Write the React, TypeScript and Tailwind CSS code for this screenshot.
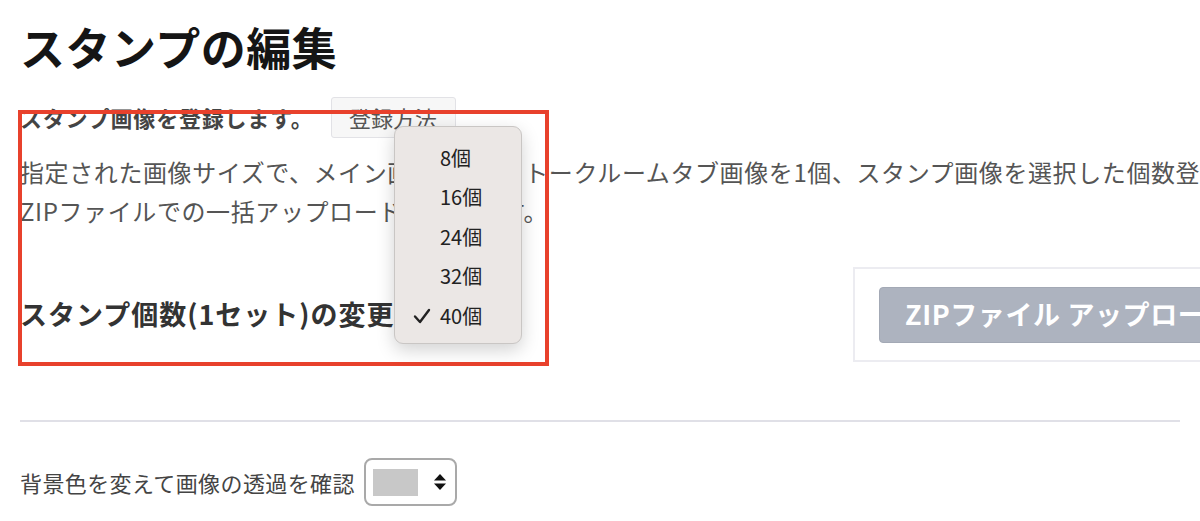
import React from "react";

const OPTIONS = ["8個", "16個", "24個", "32個", "40個"];

function CountMenu({ selected }: { selected: string }) {
  return (
    <div className="absolute left-[394px] top-[126px] w-[128px] rounded-[9px] border border-[#c9c6c4] bg-[#ebe7e5] pt-[11px] pb-[7px] shadow-[0_6px_18px_rgba(0,0,0,0.18)]">
      {OPTIONS.map((o) => (
        <div key={o} className="relative flex h-[39.5px] items-center pl-[45px] text-[20px] text-[#222]">
          {o === selected && (
            <svg className="absolute left-[18px] top-[12px]" width="18" height="16" viewBox="0 0 18 16" fill="none">
              <path d="M2 8.5 L7 14 L16 2" stroke="#222" strokeWidth="2.4" strokeLinecap="round" strokeLinejoin="round" />
            </svg>
          )}
          {o}
        </div>
      ))}
    </div>
  );
}

export default function App() {
  return (
    <div
      className="relative h-[521px] w-[1200px] overflow-hidden bg-white px-[20px]"
      style={{ fontFamily: '"Noto Sans CJK JP", "Noto Sans", sans-serif' }}
    >
      <h1 className="pt-[20px] text-[45px] font-bold leading-[53px] tracking-[0.5px] text-[#151515]">スタンプの編集</h1>

      {/* 登録の説明 */}
      <div className="mt-[24px] flex h-[41px] items-center">
        <span className="text-[22px] font-bold tracking-[0.8px] text-[#444]">スタンプ画像を登録します。</span>
        <button
          type="button"
          className="ml-[17px] h-[41px] w-[125px] rounded-[3px] border border-[#e2e2e6] bg-[#f7f7f7] text-[22px] text-[#555]"
        >
          登録方法
        </button>
      </div>

      <p className="mt-[14px] whitespace-nowrap text-[24px] leading-[39px] tracking-[0.6px] text-[#555]">
        指定された画像サイズで、メイン画像を1個、トークルームタブ画像を1個、スタンプ画像を選択した個数登録してください。
        <br />
        ZIPファイルでの一括アップロードも可能です。
      </p>

      <div className="mt-[37px] flex items-center">
        <div className="flex w-[833px] shrink-0 items-center">
          <span className="text-[27px] font-bold tracking-[1px] text-[#333]">スタンプ個数(1セット)の変更</span>
          <div className="ml-[10px] flex h-[40px] w-[110px] items-center rounded-[6px] border border-[#999] px-[10px] text-[20px]">
            40個
          </div>
        </div>
        <div className="flex h-[95px] w-[420px] shrink-0 items-center border-2 border-[#ececf1] px-[24px]">
          <button
            type="button"
            className="h-[56px] w-[400px] shrink-0 rounded-[4px] border border-[#a3a9b5] bg-[#adb3bf] pl-[25px] text-left text-[27px] font-bold tracking-[0.6px] text-white"
          >
            ZIPファイル アップロード
          </button>
        </div>
      </div>

      <div className="mt-[58px] h-[2px] bg-[#e0e0e7]" />

      <div className="mt-[36px] flex items-center">
        <span className="text-[22px] tracking-[0.4px] text-[#444]">背景色を変えて画像の透過を確認</span>
        <div className="ml-[9px] flex h-[48px] w-[93px] items-center rounded-[8px] border-2 border-[#a9a9a9] pl-[7px]">
          <div className="h-[27px] w-[45px] bg-[#c8c8c8]" />
          <svg className="ml-[15px]" width="14" height="18" viewBox="0 0 14 18">
            <path d="M7 1 L13 7.5 H1 Z" fill="#111" />
            <path d="M7 17 L13 10.5 H1 Z" fill="#111" />
          </svg>
        </div>
      </div>

      {/* 注釈の赤枠 */}
      <div className="pointer-events-none absolute left-[18px] top-[110px] h-[256px] w-[531px] border-[4px] border-[#e8412c]" />

      <CountMenu selected="40個" />
    </div>
  );
}
